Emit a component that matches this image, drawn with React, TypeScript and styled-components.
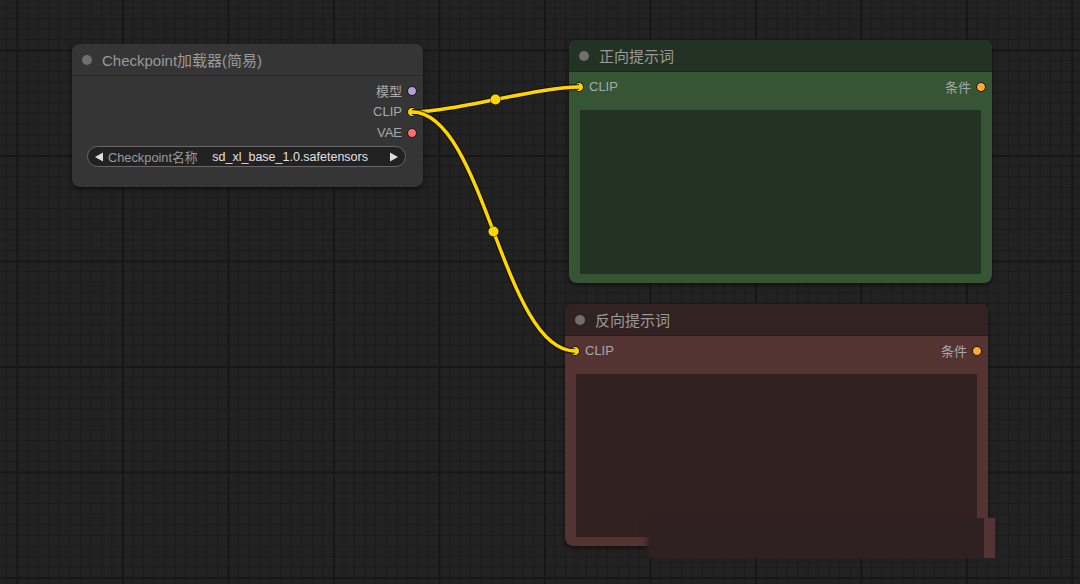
import React from 'react';
import styled, { createGlobalStyle } from 'styled-components';

const GlobalStyle = createGlobalStyle`
  html, body {
    margin: 0;
    padding: 0;
    background: #222;
  }
  * {
    box-sizing: border-box;
  }
`;

const FONT = `"Liberation Sans", Arial, "Noto Sans CJK SC", sans-serif`;

const Canvas = styled.div`
  position: relative;
  width: 1080px;
  height: 584px;
  overflow: hidden;
  font-family: ${FONT};
  background-color: #222222;
  background-image:
    linear-gradient(to right, #171717 1.5px, transparent 1.5px),
    linear-gradient(to bottom, #171717 1.5px, transparent 1.5px),
    linear-gradient(to right, #1b1b1b 1px, transparent 1px),
    linear-gradient(to bottom, #1b1b1b 1px, transparent 1px);
  background-size:
    105.5px 105.5px,
    105.5px 105.5px,
    10.55px 10.55px,
    10.55px 10.55px;
  background-position:
    16.5px 0,
    0 49.5px,
    6px 0,
    0 7.5px;
`;

const Node = styled.div<{ $x: number; $y: number; $w: number; $h: number; $bg: string }>`
  position: absolute;
  left: ${({ $x }) => $x}px;
  top: ${({ $y }) => $y}px;
  width: ${({ $w }) => $w}px;
  height: ${({ $h }) => $h}px;
  background: ${({ $bg }) => $bg};
  border-radius: 8px;
  box-shadow: 0 2px 5px rgba(0, 0, 0, 0.55);
  display: flex;
  flex-direction: column;
  overflow: hidden;
`;

const TitleBar = styled.div<{ $bg: string }>`
  height: 32px;
  flex: none;
  display: flex;
  align-items: center;
  gap: 10px;
  padding-left: 10px;
  background: ${({ $bg }) => $bg};
  border-bottom: 1px solid rgba(0, 0, 0, 0.22);
`;

const TitleDot = styled.span`
  width: 10px;
  height: 10px;
  border-radius: 50%;
  background: #6f6f6f;
`;

const TitleText = styled.span`
  font-size: 15px;
  color: #9a9a9a;
  margin-top: -1px;
`;

const Body = styled.div<{ $pad: string }>`
  flex: 1;
  display: flex;
  flex-direction: column;
  padding: ${({ $pad }) => $pad};
`;

const SlotRow = styled.div<{ $align?: 'end' | 'between' }>`
  height: 21px;
  display: flex;
  align-items: center;
  justify-content: ${({ $align }) => ($align === 'end' ? 'flex-end' : 'space-between')};
`;

const SlotGroup = styled.div`
  display: flex;
  align-items: center;
  gap: 5px;
`;

const SlotDot = styled.span<{ $color: string }>`
  width: 10px;
  height: 10px;
  border-radius: 50%;
  background: ${({ $color }) => $color};
  border: 1.5px solid #141414;
`;

const SlotLabel = styled.span`
  font-size: 13px;
  color: #a8a8a8;
`;

const Widget = styled.div`
  margin: 2px 17px 0 15px;
  height: 21px;
  border: 1px solid #676767;
  border-radius: 11px;
  background: #222;
  display: flex;
  align-items: center;
  padding: 0 6px 0 6px;
  font-size: 12.8px;
`;

const Arrow = styled.svg`
  width: 10px;
  height: 10px;
  flex: none;
`;

const WidgetLabel = styled.span`
  color: #9a9a9a;
  margin-left: 4px;
`;

const WidgetValue = styled.span`
  color: #e0e0e0;
  font-size: 12.5px;
  margin-left: auto;
  margin-right: 21px;
`;

const Spacer = styled.div`
  height: 20px;
  flex: none;
`;

const TextArea = styled.div<{ $bg: string }>`
  flex: 1;
  margin-top: 13px;
  background: ${({ $bg }) => $bg};
`;

const LinkLayer = styled.svg`
  position: absolute;
  inset: 0;
  width: 1080px;
  height: 584px;
  pointer-events: none;
`;

const Patch = styled.div`
  position: absolute;
  left: 649px;
  top: 518px;
  width: 335px;
  height: 40px;
  background: #2f2121;
  box-shadow: -4px 0 6px -2px #2f2121;
`;

const PatchEdge = styled.div`
  position: absolute;
  left: 984px;
  top: 518px;
  width: 11px;
  height: 40px;
  background: #533333;
`;

type Pt = [number, number];

const linkPath = (a: Pt, b: Pt) => {
  const d = Math.hypot(b[0] - a[0], b[1] - a[1]) * 0.25;
  return `M${a[0]},${a[1]} C${a[0] + d},${a[1]} ${b[0] - d},${b[1]} ${b[0]},${b[1]}`;
};

const midPoint = (a: Pt, b: Pt): Pt => {
  const d = Math.hypot(b[0] - a[0], b[1] - a[1]) * 0.25;
  return [(a[0] + 3 * (a[0] + d) + 3 * (b[0] - d) + b[0]) / 8, (a[1] * 4 + b[1] * 4) / 8];
};

const links: [Pt, Pt][] = [
  [[412, 112], [579, 87]],
  [[412, 112], [575, 351]],
];

const Left = () => (
  <Arrow viewBox="0 0 10 10">
    <polygon points="1,5 9,0.5 9,9.5" fill="#dcdcdc" />
  </Arrow>
);

const Right = () => (
  <Arrow viewBox="0 0 10 10">
    <polygon points="9,5 1,0.5 1,9.5" fill="#dcdcdc" />
  </Arrow>
);

const PromptNode = ({ x, y, h, title, head, body, area }: { x: number; y: number; h: number; title: string; head: string; body: string; area: string }) => (
  <Node $x={x} $y={y} $w={423} $h={h} $bg={body}>
    <TitleBar $bg={head}>
      <TitleDot />
      <TitleText>{title}</TitleText>
    </TitleBar>
    <Body $pad="4px 11px 9px 11px">
      <SlotRow>
        <SlotGroup>
          <SlotDot $color="#ffd500" style={{ marginLeft: -6 }} />
          <SlotLabel>CLIP</SlotLabel>
        </SlotGroup>
        <SlotGroup>
          <SlotLabel>条件</SlotLabel>
          <SlotDot $color="#ffa931" style={{ marginRight: -5 }} />
        </SlotGroup>
      </SlotRow>
      <TextArea $bg={area} />
    </Body>
  </Node>
);

export default function App() {
  return (
    <Canvas>
      <GlobalStyle />
      <Node $x={72} $y={44} $w={351} $h={143} $bg="#353535">
        <TitleBar $bg="#353535">
          <TitleDot />
          <TitleText>Checkpoint加载器(简易)</TitleText>
        </TitleBar>
        <Body $pad="4px 6px 0 0">
          <SlotRow $align="end">
            <SlotGroup>
              <SlotLabel>模型</SlotLabel>
              <SlotDot $color="#b39ddb" />
            </SlotGroup>
          </SlotRow>
          <SlotRow $align="end">
            <SlotGroup>
              <SlotLabel>CLIP</SlotLabel>
              <SlotDot $color="#ffd500" />
            </SlotGroup>
          </SlotRow>
          <SlotRow $align="end">
            <SlotGroup>
              <SlotLabel>VAE</SlotLabel>
              <SlotDot $color="#ff6e6e" />
            </SlotGroup>
          </SlotRow>
        </Body>
        <Widget>
          <Left />
          <WidgetLabel>Checkpoint名称</WidgetLabel>
          <WidgetValue>sd_xl_base_1.0.safetensors</WidgetValue>
          <Right />
        </Widget>
        <Spacer />
      </Node>

      <PromptNode x={569} y={40} h={243} title="正向提示词" head="#233323" body="#355535" area="#233323" />
      <PromptNode x={565} y={304} h={242} title="反向提示词" head="#322222" body="#553333" area="#312121" />

      <LinkLayer viewBox="0 0 1080 584">
        {links.map(([a, b], i) => {
          const m = midPoint(a, b);
          return (
            <g key={i}>
              <path d={linkPath(a, b)} stroke="#111" strokeWidth={6} fill="none" strokeOpacity={0.75} />
              <path d={linkPath(a, b)} stroke="#ffd500" strokeWidth={3.5} fill="none" />
              <circle cx={m[0]} cy={m[1]} r={5.5} fill="#111" fillOpacity={0.6} />
              <circle cx={m[0]} cy={m[1]} r={5} fill="#ffd500" />
            </g>
          );
        })}
      </LinkLayer>

      <Patch />
      <PatchEdge />
    </Canvas>
  );
}
